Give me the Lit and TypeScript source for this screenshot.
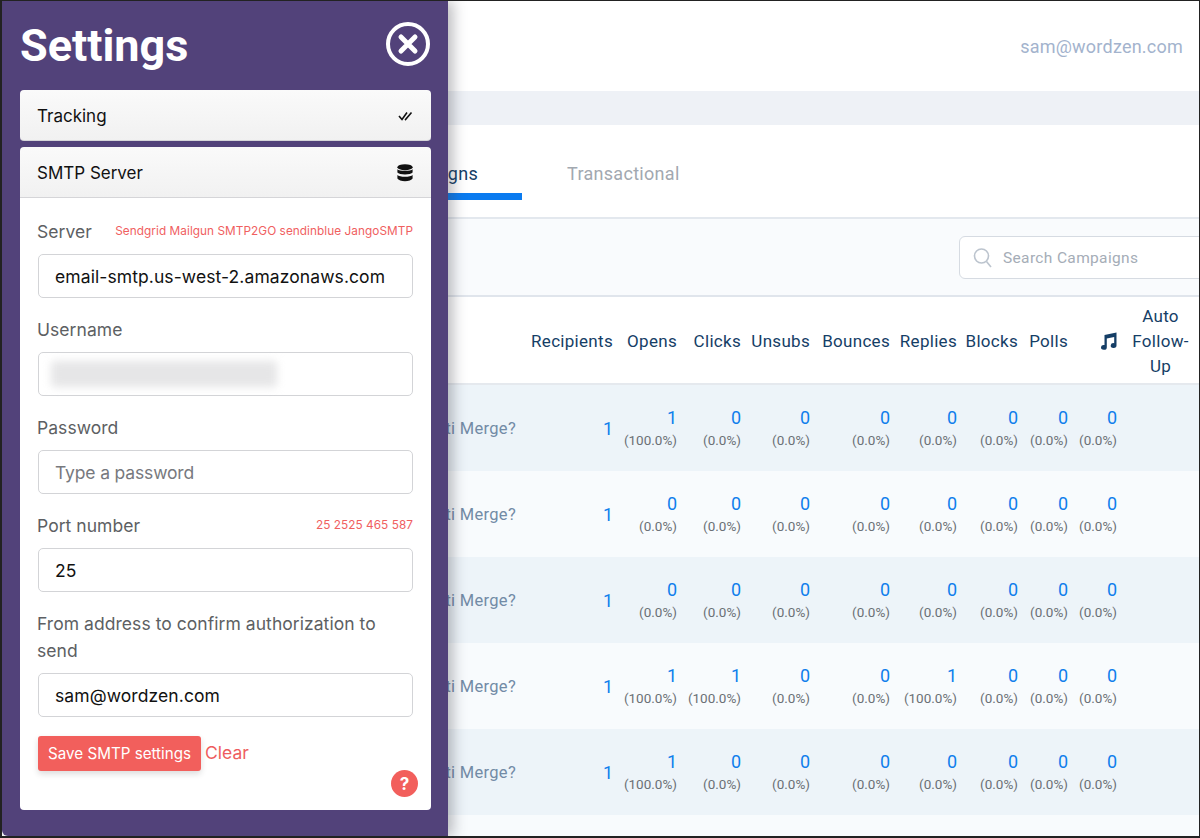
import { LitElement, html, css } from "lit";
import { customElement } from "lit/decorators.js";

const rows = [
  [["1", "(100.0%)"], ["0", "(0.0%)"], ["0", "(0.0%)"], ["0", "(0.0%)"], ["0", "(0.0%)"], ["0", "(0.0%)"], ["0", "(0.0%)"], ["0", "(0.0%)"]],
  [["0", "(0.0%)"], ["0", "(0.0%)"], ["0", "(0.0%)"], ["0", "(0.0%)"], ["0", "(0.0%)"], ["0", "(0.0%)"], ["0", "(0.0%)"], ["0", "(0.0%)"]],
  [["0", "(0.0%)"], ["0", "(0.0%)"], ["0", "(0.0%)"], ["0", "(0.0%)"], ["0", "(0.0%)"], ["0", "(0.0%)"], ["0", "(0.0%)"], ["0", "(0.0%)"]],
  [["1", "(100.0%)"], ["1", "(100.0%)"], ["0", "(0.0%)"], ["0", "(0.0%)"], ["1", "(100.0%)"], ["0", "(0.0%)"], ["0", "(0.0%)"], ["0", "(0.0%)"]],
  [["1", "(100.0%)"], ["0", "(0.0%)"], ["0", "(0.0%)"], ["0", "(0.0%)"], ["0", "(0.0%)"], ["0", "(0.0%)"], ["0", "(0.0%)"], ["0", "(0.0%)"]],
];
const heads = ["Recipients", "Opens", "Clicks", "Unsubs", "Bounces", "Replies", "Blocks", "Polls"];

@customElement("app-root")
export class AppRoot extends LitElement {
  static styles = css`
    :host { display: block; width: 1200px; height: 838px; overflow: hidden; position: relative; background: #fff; font-family: "Inter", "Liberation Sans", sans-serif; box-sizing: border-box; border: solid #222; border-width: 1px 1px 2px 2px; }
    * { box-sizing: border-box; }
    .main { height: 835px; overflow: hidden; display: flex; flex-direction: column; font-family: Roboto, sans-serif; }
    .top { height: 90px; flex: none; display: flex; justify-content: flex-end; align-items: center; padding: 0 16px 0 0; color: #a3b3cd; font-size: 18px; letter-spacing: .23px; }
    .band { height: 34px; flex: none; background: #eef1f6; }
    .tabs { height: 94px; flex: none; display: flex; align-items: flex-end; border-bottom: 2px solid #e3e8ee; padding: 0 0 17px 0; background: #fff; }
    .tab { height: 46px; font-size: 18px; letter-spacing: .3px; padding-top: 9px; }
    .tab.on { width: 520px; text-align: right; padding-right: 44px; color: #153e66; border-bottom: 7px solid #0a7bf0; }
    .tab.off { margin-left: 45px; color: #a2a8b0; }
    .filter { height: 78px; flex: none; background: #f9fbfd; border-bottom: 2px solid #e0e5ec; display: flex; justify-content: flex-end; padding: 17px 0 0 0; }
    .search { width: 260px; height: 43px; margin-right: -20px; border: 1px solid #d6dbe2; border-radius: 6px; background: #fff; display: flex; align-items: center; gap: 10px; padding-left: 13px; color: #a5adb7; font-size: 15.5px; letter-spacing: .35px; }
    .row { display: grid; grid-template-columns: 514px 97px 64px 64px 69px 80px 67px 61px 50px 49px 82px; flex: none; }
    .head { height: 88px; background: #fff; border-bottom: 2px solid #e5e9ee; align-items: center; color: #153e66; font-size: 17px; letter-spacing: .3px; text-align: right; padding-top: 2px; }
    .auto { padding: 0 8px 0 13px; text-align: center; line-height: 25px; }
    .note { display: flex; justify-content: flex-end; }
    .data { height: 86px; align-items: center; text-align: right; background: #f8fbfd; }
    .data.odd { background: #edf4f9; }
    .name { color: #728ba6; font-size: 16.5px; letter-spacing: .3px; white-space: nowrap; }
    .one { color: #0f7fec; font-size: 18px; }
    .cell { display: flex; flex-direction: column; gap: 4px; margin-top: 2px; color: #0f7fec; font-size: 18px; line-height: 19px; white-space: nowrap; }
    .cell small { color: #6b7075; font-size: 13.5px; line-height: 19px; }
    .side { position: absolute; left: 0; top: 0; width: 446px; height: 835px; background: #52427a; box-shadow: 5px 0 14px rgba(60, 60, 70, .35); padding: 19px 17px 0 18px; display: flex; flex-direction: column; border-radius: 0 0 0 6px; }
    .title { display: flex; justify-content: space-between; align-items: center; height: 51px; margin-bottom: 19px; }
    h1 { margin: 0; color: #fff; font-family: Roboto, sans-serif; font-size: 45px; line-height: 51px; font-weight: 700; }
    .close { margin: -3px 1px 0 0; display: block; }
    .acc { height: 51px; flex: none; background: linear-gradient(#fafafa, #f1f1f1); border-radius: 4px; border-bottom: 1px solid #d5d5d8; display: flex; justify-content: space-between; align-items: center; padding: 1px 18px 0 17px; color: #111; font-size: 17px; }
    .acc + .acc { margin-top: 6px; }
    .acc.open { border-radius: 4px 4px 0 0; }
    .card { background: #fff; border-radius: 0 0 4px 4px; height: 612px; padding: 20px 18px 0; position: relative; display: flex; flex-direction: column; }
    .lab { display: flex; justify-content: space-between; align-items: center; color: #5d5f63; font-size: 17.5px; letter-spacing: .05px; line-height: 27px; margin: 0 0 9px -1px; }
    .lab span.red { color: #f0605f; font-size: 11.8px; }
    .input { height: 44px; flex: none; border: 1px solid #d3d4d7; border-radius: 5px; display: flex; align-items: center; padding: 0 16px; font-size: 17.5px; letter-spacing: .09px; color: #111; margin-bottom: 18px; background: #fff; white-space: nowrap; }
    .input.ph { color: #77797e; letter-spacing: -.15px; }
    .blur { width: 226px; height: 26px; margin-left: -4px; background: #e6e6e7; border-radius: 4px; filter: blur(4px); }
    .actions { display: flex; align-items: flex-start; gap: 4px; margin-top: 1px; }
    .save { height: 35px; background: #f25f5c; color: #fff; border-radius: 3px; font-size: 15.2px; display: flex; align-items: center; padding: 0 10px; box-shadow: 0 3px 6px rgba(0,0,0,.14); }
    .clear { color: #ee5d5e; font-size: 17.5px; line-height: 27px; margin-top: 3px; }
    .help { position: absolute; right: 13px; bottom: 13px; width: 27px; height: 27px; border-radius: 50%; background: #f25f5c; color: #fff; font-weight: 700; font-size: 17px; display: flex; align-items: center; justify-content: center; }
  `;

  private closeIcon() {
    return html`<svg class="close" width="44" height="44" viewBox="0 0 44 44" fill="none" stroke="#fff"><circle cx="22" cy="22" r="20" stroke-width="4"/><path d="M15 15 L29 29 M29 15 L15 29" stroke-width="5" stroke-linecap="round"/></svg>`;
  }
  private checks() {
    return html`<svg width="15" height="10" viewBox="0 0 15 10" fill="none" stroke="#111" stroke-width="1.6"><path d="M1 5 L4 8.5 L9 1.5 M7 8 L7.5 8.5 L13.5 1.5"/></svg>`;
  }
  private db() {
    return html`<svg width="16" height="18" viewBox="0 0 16 18" fill="#111"><ellipse cx="8" cy="3.2" rx="7.6" ry="3"/><path d="M.4 5.2 C2 7.4 14 7.4 15.6 5.2 V8.6 C14 11.2 2 11.2 .4 8.6Z"/><path d="M.4 11 C2 13.4 14 13.4 15.6 11 V14.6 C14 18 2 18 .4 14.6Z"/></svg>`;
  }
  private music() {
    return html`<svg width="18" height="18" viewBox="0 0 18 18" fill="#153e66"><path d="M5.5 3 L17.5 .5 V13.5 A2.9 2.4 0 1 1 15.2 11.2 V5 L7.8 6.6 V15.2 A2.9 2.4 0 1 1 5.5 13 Z"/></svg>`;
  }
  private mag() {
    return html`<svg width="20" height="22" viewBox="0 0 20 22" fill="none" stroke="#bcc4ce" stroke-width="1.6"><circle cx="8.5" cy="9" r="7"/><path d="M13.5 14.5 L18 20"/></svg>`;
  }

  render() {
    return html`
      <div class="main">
        <div class="top">sam@wordzen.com</div>
        <div class="band"></div>
        <div class="tabs"><div class="tab on">Campaigns</div><div class="tab off">Transactional</div></div>
        <div class="filter"><div class="search">${this.mag()}<span>Search Campaigns</span></div></div>
        <div class="row head">
          <span></span>
          ${heads.map((h) => html`<span>${h}</span>`)}
          <span class="note">${this.music()}</span>
          <span class="auto">Auto Follow-Up</span>
        </div>
        ${rows.map((r, i) => html`
          <div class="row data ${i % 2 === 0 ? "odd" : ""}">
            <span class="name">Multi Merge?</span>
            <span class="one">1</span>
            ${r.map((c) => html`<div class="cell"><span>${c[0]}</span><small>${c[1]}</small></div>`)}
          </div>`)}
        <div class="row data"></div>
      </div>
      <aside class="side">
        <div class="title"><h1>Settings</h1>${this.closeIcon()}</div>
        <div class="acc"><span>Tracking</span>${this.checks()}</div>
        <div class="acc open"><span>SMTP Server</span>${this.db()}</div>
        <div class="card">
          <div class="lab"><span>Server</span><span class="red">Sendgrid Mailgun SMTP2GO sendinblue JangoSMTP</span></div>
          <div class="input">email-smtp.us-west-2.amazonaws.com</div>
          <div class="lab"><span>Username</span></div>
          <div class="input"><div class="blur"></div></div>
          <div class="lab"><span>Password</span></div>
          <div class="input ph">Type a password</div>
          <div class="lab"><span>Port number</span><span class="red">25 2525 465 587</span></div>
          <div class="input">25</div>
          <div class="lab"><span>From address to confirm authorization to send</span></div>
          <div class="input">sam@wordzen.com</div>
          <div class="actions"><div class="save">Save SMTP settings</div><div class="clear">Clear</div></div>
          <div class="help">?</div>
        </div>
      </aside>
    `;
  }
}
